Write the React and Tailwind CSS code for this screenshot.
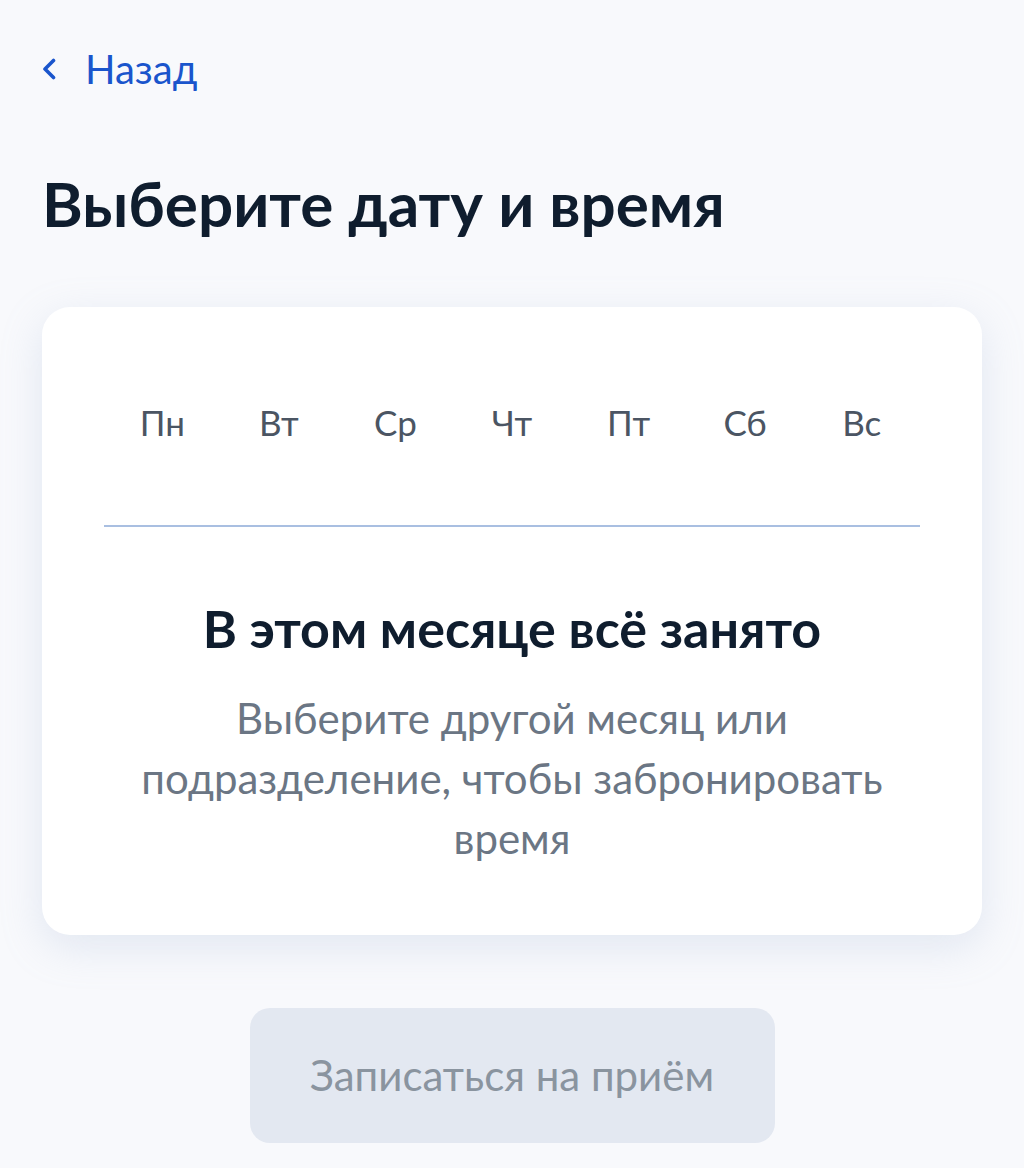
const DAYS = ['Пн', 'Вт', 'Ср', 'Чт', 'Пт', 'Сб', 'Вс']

function BackChevron() {
  return (
    <svg width="14" height="22" viewBox="0 0 14 22" fill="none">
      <path d="M11.5 2.5 3 11l8.5 8.5" stroke="currentColor" strokeWidth="3.6" strokeLinecap="round" strokeLinejoin="round" />
    </svg>
  )
}

export default function App() {
  return (
    <div className="min-h-[1168px] w-[1024px] bg-[#f8f9fc] font-['Lato','Noto_Sans',sans-serif] overflow-hidden">
      <div className="px-[42px] pt-[44px]">
        <button className="flex items-center gap-[29px] text-[#1a55cc]">
          <BackChevron />
          <span className="text-[40px] leading-[50px]">Назад</span>
        </button>

        <h1 className="mt-[74px] text-[62px] leading-[70px] font-bold text-[#0f1d2e]">
          Выберите дату и время
        </h1>

        <div className="mt-[69px] bg-white rounded-[28px] shadow-[0_12px_40px_rgba(160,180,210,0.25)] pt-[95px] pb-[67px] px-[62px]">
          <div className="grid grid-cols-7">
            {DAYS.map(d => (
              <div key={d} className="text-center text-[35px] leading-[40px] text-[#4b5563]">{d}</div>
            ))}
          </div>
          <div className="mt-[83px] h-[2px] bg-[#a9bfe1]" />

          <div className="mt-[71px] text-center text-[52px] leading-[60px] font-bold text-[#0f1d2e]">
            В этом месяце всё занято
          </div>
          <div className="mt-[30px] mx-auto max-w-[760px] text-center text-[42px] leading-[60px] text-[#6b7684]">
            Выберите другой месяц или подразделение, чтобы забронировать время
          </div>
        </div>

        <div className="mt-[73px] flex justify-center">
          <button className="w-[525px] h-[135px] rounded-[20px] bg-[#e3e8f1] text-[42px] text-[#8a949f]">
            Записаться на приём
          </button>
        </div>
      </div>
    </div>
  )
}
